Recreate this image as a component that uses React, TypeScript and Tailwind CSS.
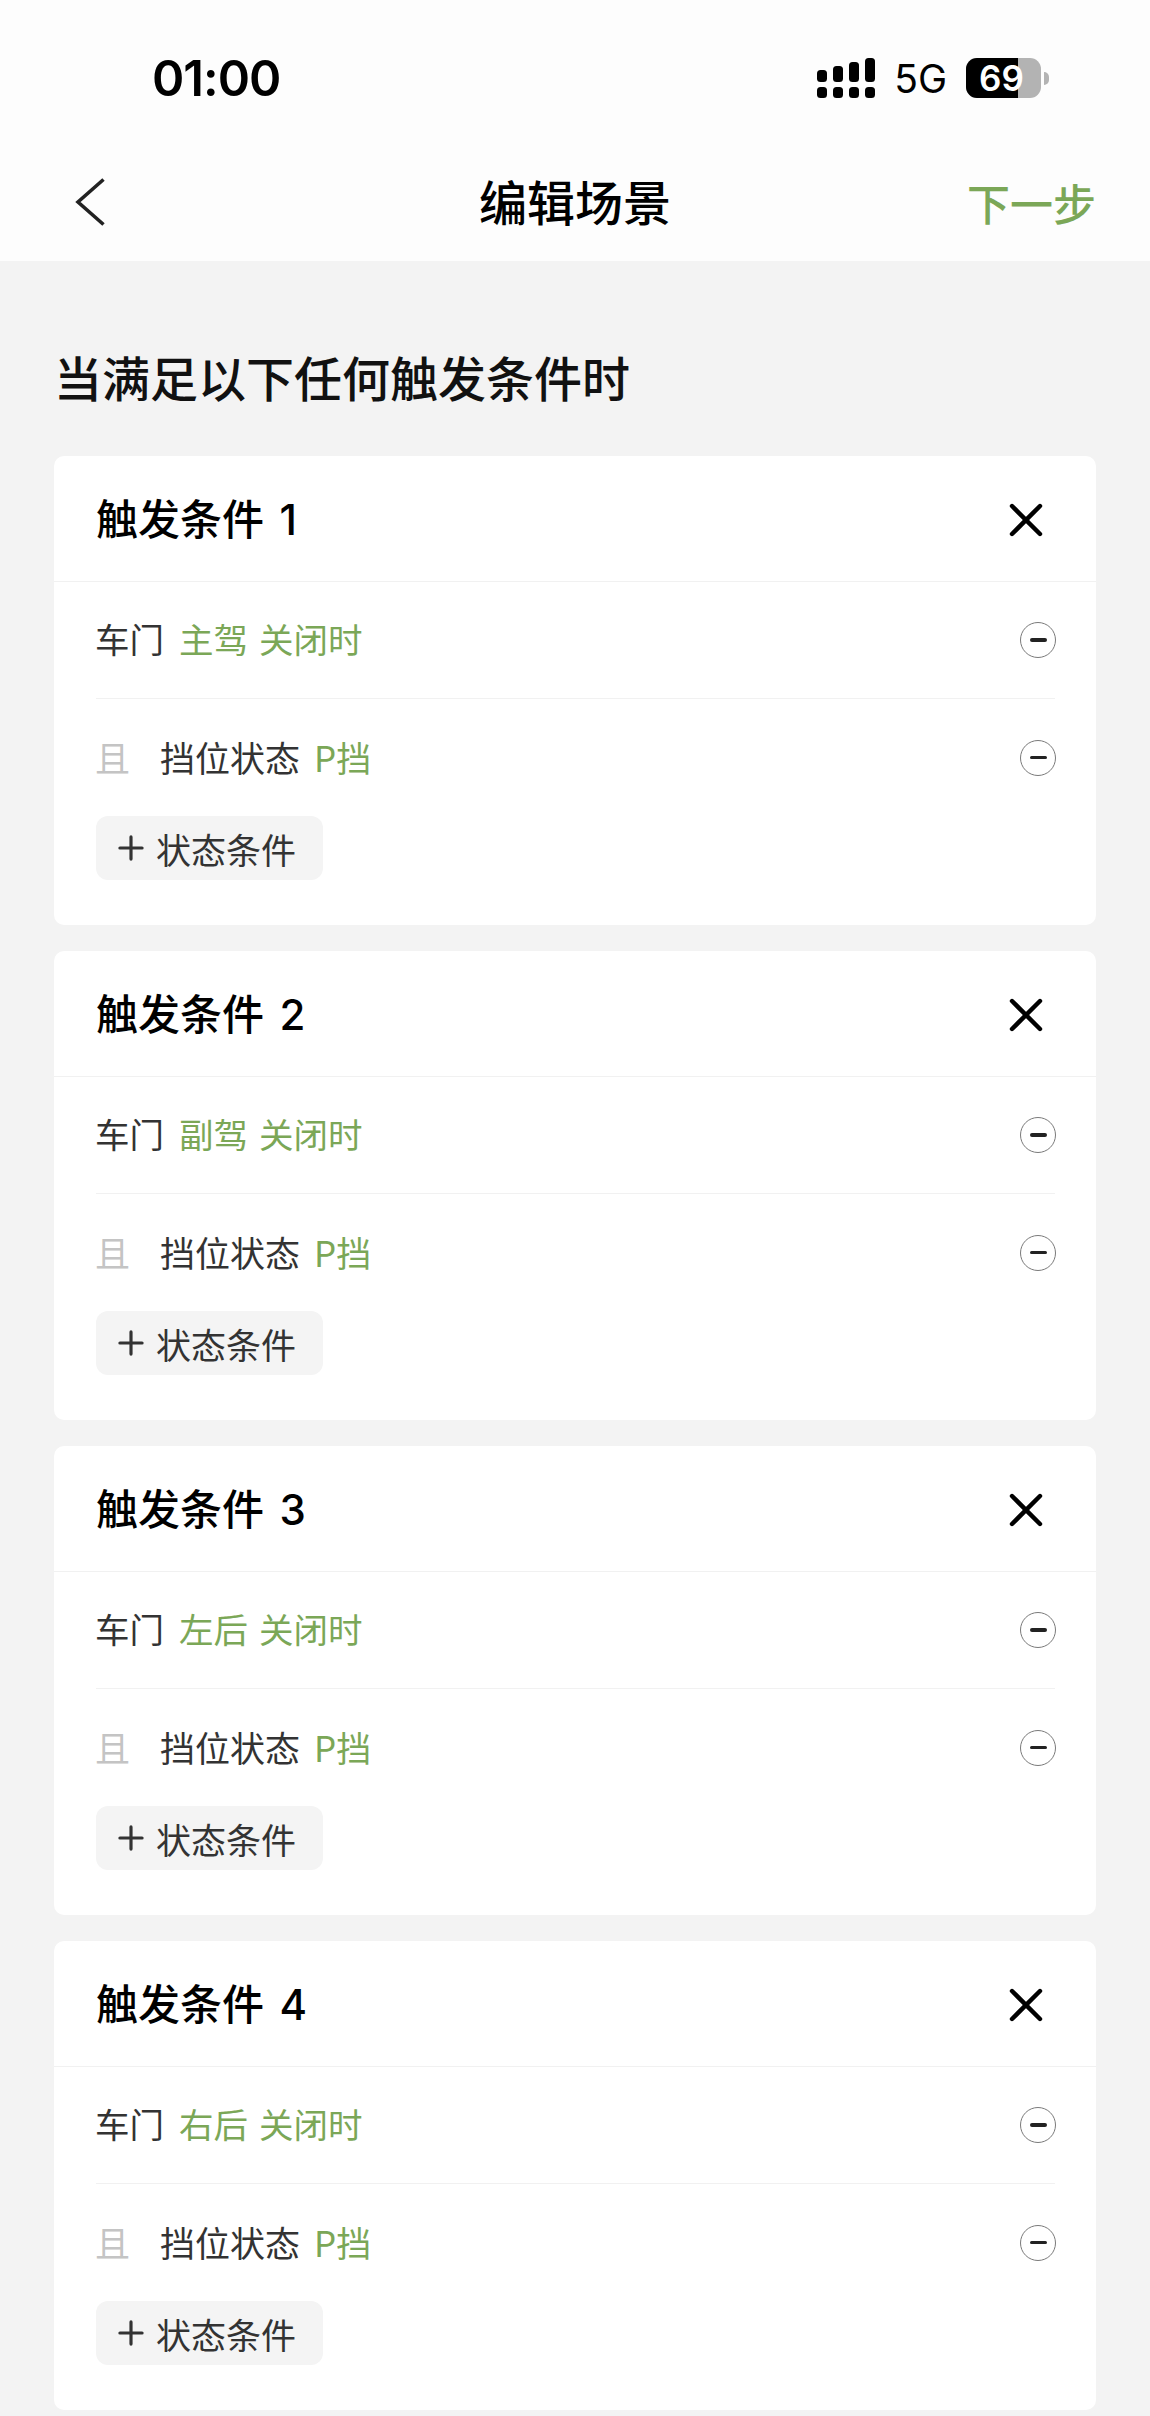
import { Plus, X } from "lucide-react";

const cards = [
  { id: 1, door: "主驾" },
  { id: 2, door: "副驾" },
  { id: 3, door: "左后" },
  { id: 4, door: "右后" },
];

function SignalIcon() {
  const bars = [
    { x: 0, y: 12, h: 12 },
    { x: 16, y: 8, h: 16 },
    { x: 32, y: 4, h: 20 },
    { x: 48, y: 0, h: 24 },
  ];
  return (
    <svg width="58" height="40" viewBox="0 0 58 40" fill="#000">
      {bars.map((b) => (
        <g key={b.x}>
          <rect x={b.x} y={b.y} width="10" height={b.h} rx="3.5" />
          <rect x={b.x} y="29" width="10" height="11" rx="3.5" />
        </g>
      ))}
    </svg>
  );
}

function BatteryIcon() {
  return (
    <div className="flex items-center gap-[3px]">
      <div className="relative flex h-[40px] w-[75px] items-center overflow-hidden rounded-[11px] bg-[#b3b3b3]">
        <div className="h-full w-[52px] bg-black" />
        <span className="absolute left-[13px] top-0 font-['Inter',sans-serif] text-[35px] leading-[40px] font-semibold text-white">
          69
        </span>
      </div>
      <div className="h-[13px] w-[5px] rounded-r-full bg-[#b3b3b3]" />
    </div>
  );
}

function BackIcon() {
  return (
    <svg width="32" height="48" viewBox="0 0 32 48" fill="none" stroke="#222" strokeWidth="3.6">
      <path d="M29.5 1.5 L4 24 L29.5 46.5" />
    </svg>
  );
}

function RemoveIcon() {
  return (
    <div className="flex size-[36px] shrink-0 items-center justify-center rounded-full border-[1.5px] border-[#7a7a7a]">
      <div className="h-[3.5px] w-[17px] rounded-full bg-[#222]" />
    </div>
  );
}

function TriggerCard({ id, door }: { id: number; door: string }) {
  return (
    <section className="h-[469px] rounded-[10px] bg-white">
      <div className="flex h-[126px] items-center justify-between border-b border-[#f1f1f1] pr-[42px] pl-[42px]">
        <h2 className="mb-[1px] text-[42px] leading-none font-medium text-black">
          触发条件 <span className="ml-[6px] font-['Inter',sans-serif] text-[42px]">{id}</span>
        </h2>
        <X className="mt-[3px]" size={56} strokeWidth={1.9} color="#000" />
      </div>
      <div className="pl-[41px]">
        <div className="ml-[1px] mr-[41px] flex h-[117px] items-center justify-between border-b border-[#f1f1f1]">
          <p className="-ml-[1px] mb-[4px] text-[34.5px] leading-none text-[#333]">
            车门
            <span className="ml-[15px] text-[#7ba757]">
              {door}
              <span className="ml-[11px]">关闭时</span>
            </span>
          </p>
          <div className="-mr-[1px]">
            <RemoveIcon />
          </div>
        </div>
        <div className="mr-[40px] flex h-[117px] items-center">
          <span className="mb-[3px] w-[65px] text-[35px] leading-none text-[#c4c4c4]">且</span>
          <p className="mb-[3px] flex-1 text-[35px] leading-none text-[#333]">
            挡位状态<span className="ml-[14px] text-[#7ba757]">P挡</span>
          </p>
          <RemoveIcon />
        </div>
        <button className="ml-[1px] flex h-[64px] w-[227px] items-center gap-[6px] rounded-[12px] bg-[#f4f4f4] pl-[16px] text-[35px] leading-none text-[#333]">
          <Plus size={38} strokeWidth={2} color="#333" />
          状态条件
        </button>
      </div>
    </section>
  );
}

export default function App() {
  return (
    <div className="min-h-[2416px] w-[1150px] bg-[#f3f3f3] font-['Noto_Sans_CJK_SC','Noto_Sans',sans-serif]">
      <header className="h-[261px] bg-[#fdfdfd]">
        <div className="flex h-[156px] items-center justify-between pr-[101px] pl-[152px]">
          <span className="font-['Inter',sans-serif] text-[49px] leading-none font-semibold tracking-[-1px] text-black">
            01:00
          </span>
          <div className="flex items-center gap-[19px]">
            <SignalIcon />
            <span className="font-['Inter',sans-serif] text-[39px] leading-none text-black">5G</span>
            <BatteryIcon />
          </div>
        </div>
        <div className="relative flex h-[92px] items-center justify-between pr-[54px] pl-[74px]">
          <BackIcon />
          <h1 className="absolute left-0 -mt-[4px] w-full text-center text-[48px] leading-none font-medium text-black">
            编辑场景
          </h1>
          <span className="text-[43px] leading-none font-medium text-[#7ba757]">下一步</span>
        </div>
      </header>
      <main className="px-[54px] pt-[86px]">
        <h3 className="mb-[51px] text-[48px] leading-[58px] font-medium text-[#111]">
          当满足以下任何触发条件时
        </h3>
        <div className="flex flex-col gap-[26px]">
          {cards.map((c) => (
            <TriggerCard key={c.id} id={c.id} door={c.door} />
          ))}
        </div>
      </main>
    </div>
  );
}
